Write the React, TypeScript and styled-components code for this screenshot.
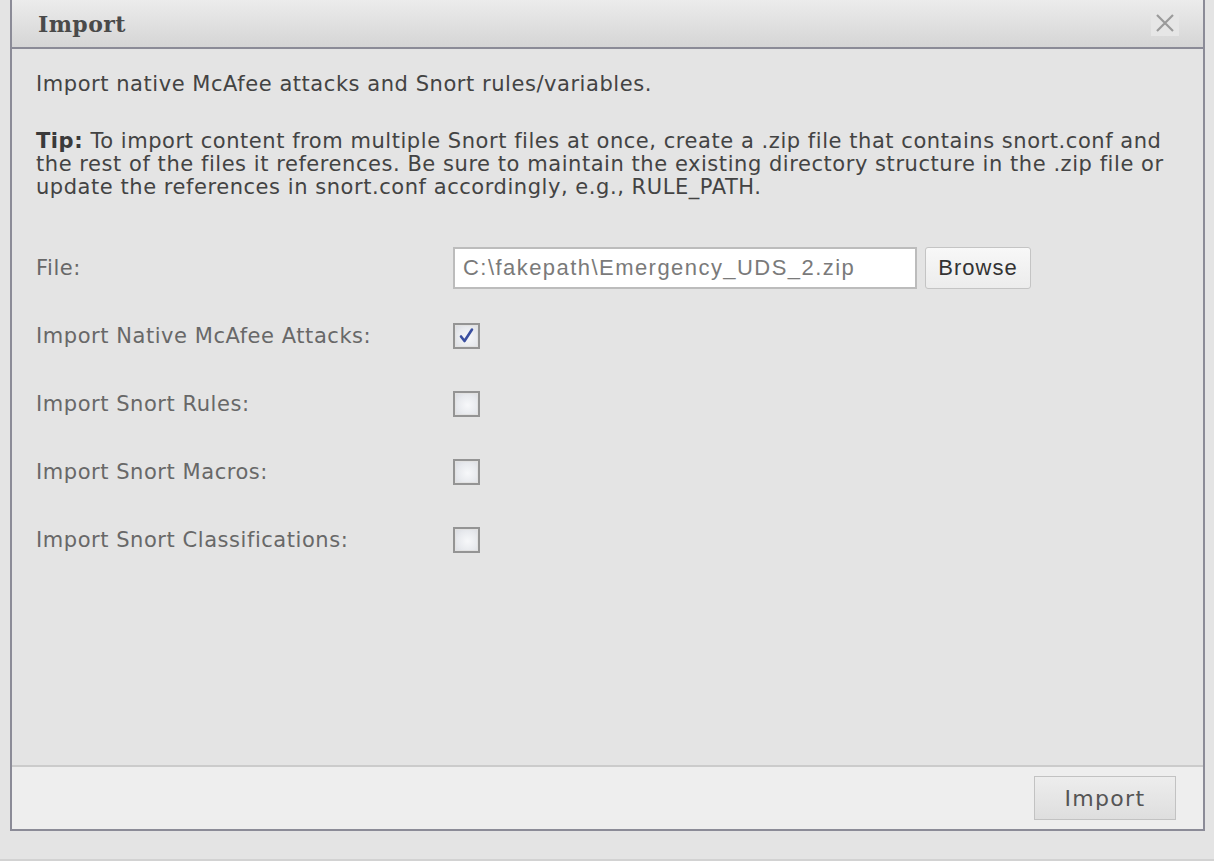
import React, { useState } from 'react';
import styled, { createGlobalStyle } from 'styled-components';

const GlobalStyle = createGlobalStyle`
  html, body {
    margin: 0;
    padding: 0;
    background: #e4e4e4;
  }
  body {
    font-family: "DejaVu Sans", Verdana, sans-serif;
  }
`;

const Page = styled.div`
  height: 861px;
  display: flex;
  flex-direction: column;
  overflow: hidden;
`;

const Dialog = styled.div`
  margin-left: 10px;
  width: 1191px;
  height: 829px;
  display: flex;
  flex-direction: column;
  border: 2px solid #8b8b97;
  border-top: none;
  background: #e4e4e4;
`;

const Header = styled.div`
  height: 47px;
  flex-shrink: 0;
  display: flex;
  align-items: center;
  justify-content: space-between;
  padding: 0 24px 0 26px;
  background: linear-gradient(#ececec, #d5d5d5);
  border-bottom: 2px solid #8b8b97;
`;

const Title = styled.h1`
  margin: 0;
  font-family: "DejaVu Serif", Georgia, serif;
  font-weight: bold;
  font-size: 22px;
  letter-spacing: 0.4px;
  color: #4a4a4a;
`;

const CloseButton = styled.button`
  border: none;
  background: #e6e6e6;
  width: 28px;
  height: 26px;
  padding: 0;
  display: flex;
  align-items: center;
  justify-content: center;
  margin-top: -2px;
  cursor: pointer;
`;

const Body = styled.div`
  flex: 1;
  padding: 24px 24px 0 24px;
  color: #434343;
  font-size: 21px;
  letter-spacing: 0.55px;
`;

const Intro = styled.p`
  margin: 0 0 34px 0;
  line-height: 23px;
  white-space: nowrap;
`;

const Tip = styled.p`
  margin: 0 0 47px 0;
  line-height: 23px;
  white-space: nowrap;

  b {
    color: #3a3a3a;
  }
`;

const Form = styled.div`
  display: flex;
  flex-direction: column;
  gap: 25px;
`;

const Row = styled.div`
  display: grid;
  grid-template-columns: 417px 1fr;
  align-items: center;
  min-height: 43px;
`;

const Label = styled.span`
  color: #686868;
`;

const FileField = styled.div`
  display: flex;
  align-items: center;
  gap: 8px;
`;

const PathInput = styled.input`
  width: 464px;
  height: 42px;
  box-sizing: border-box;
  border: 2px solid #bcbcbc;
  background: #fff;
  padding: 0 8px;
  font-family: "Liberation Sans", Arial, sans-serif;
  font-size: 22px;
  letter-spacing: 1.45px;
  color: #7a7a7a;
  outline: none;
`;

const SmallButton = styled.button`
  height: 42px;
  width: 106px;
  box-sizing: border-box;
  padding: 0;
  border: 1px solid #c4c4c4;
  border-radius: 3px;
  background: linear-gradient(#f8f8f8, #ececec);
  font-family: "Liberation Sans", Arial, sans-serif;
  font-size: 22px;
  letter-spacing: 1px;
  color: #333;
`;

const Box = styled.span<{ $checked: boolean }>`
  width: 27px;
  height: 26px;
  box-sizing: border-box;
  border: 2px solid #949494;
  background: radial-gradient(circle at 55% 55%, #f7f8fa 0%, #e8eaee 55%, #d8dae0 100%);
  box-shadow: inset 0 0 0 1px #e2e2e2;
  display: flex;
  align-items: center;
  justify-content: center;
  cursor: pointer;
`;

const Footer = styled.div`
  height: 62px;
  flex-shrink: 0;
  display: flex;
  align-items: center;
  justify-content: flex-end;
  padding-right: 27px;
  background: #eeeeee;
  border-top: 2px solid #cbcbcb;
`;

const ImportButton = styled.button`
  width: 142px;
  height: 44px;
  border: 1px solid #c2c2c2;
  background: linear-gradient(#ededed, #dedede);
  font-family: "DejaVu Sans", Verdana, sans-serif;
  font-size: 22px;
  letter-spacing: 1.3px;
  color: #555;
  cursor: pointer;
`;

const BottomStrip = styled.div`
  flex: 1;
  border-bottom: 2px solid #d2d2d2;
`;

const Check = () => (
  <svg width="17" height="17" viewBox="0 0 17 17">
    <path
      d="M3 9.5 L6.5 14 L14 2.5"
      fill="none"
      stroke="#3a4fa0"
      strokeWidth="2.6"
      strokeLinecap="round"
      strokeLinejoin="round"
    />
  </svg>
);

const CheckBox = ({ checked, onToggle }: { checked: boolean; onToggle: () => void }) => (
  <Box $checked={checked} onClick={onToggle} role="checkbox" aria-checked={checked}>
    {checked && <Check />}
  </Box>
);

const options = [
  'Import Native McAfee Attacks:',
  'Import Snort Rules:',
  'Import Snort Macros:',
  'Import Snort Classifications:',
];

const App: React.FC = () => {
  const [checked, setChecked] = useState([true, false, false, false]);

  const toggle = (i: number) =>
    setChecked(prev => prev.map((v, idx) => (idx === i ? !v : v)));

  return (
    <Page>
      <GlobalStyle />
      <Dialog>
        <Header>
          <Title>Import</Title>
          <CloseButton aria-label="Close">
            <svg width="20" height="20" viewBox="0 0 20 20">
              <path d="M2 2 L18 18 M18 2 L2 18" stroke="#9a9a9a" strokeWidth="2.2" />
            </svg>
          </CloseButton>
        </Header>
        <Body>
          <Intro>Import native McAfee attacks and Snort rules/variables.</Intro>
          <Tip>
            <b>Tip:</b> To import content from multiple Snort files at once, create a .zip file that contains snort.conf and
            <br />
            the rest of the files it references. Be sure to maintain the existing directory structure in the .zip file or
            <br />
            update the references in snort.conf accordingly, e.g., RULE_PATH.
          </Tip>
          <Form>
            <Row>
              <Label>File:</Label>
              <FileField>
                <PathInput readOnly value="C:\fakepath\Emergency_UDS_2.zip" />
                <SmallButton>Browse</SmallButton>
              </FileField>
            </Row>
            {options.map((label, i) => (
              <Row key={label}>
                <Label>{label}</Label>
                <CheckBox checked={checked[i]} onToggle={() => toggle(i)} />
              </Row>
            ))}
          </Form>
        </Body>
        <Footer>
          <ImportButton>Import</ImportButton>
        </Footer>
      </Dialog>
      <BottomStrip />
    </Page>
  );
};

export default App;
